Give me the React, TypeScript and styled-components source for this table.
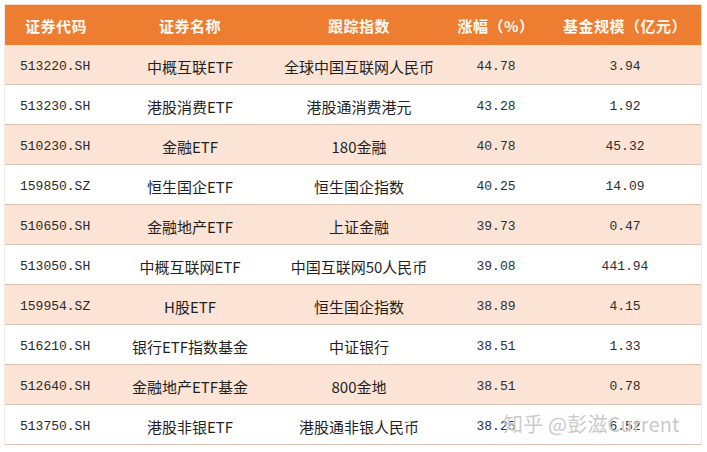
import React from "react";
import styled, { createGlobalStyle } from "styled-components";

const Global = createGlobalStyle`
  html, body { margin: 0; padding: 0; background: #ffffff; }
  body { font-family: "Noto Sans CJK SC", sans-serif; }
`;

const COLS = "102px 166px 172px 102px 156px";

const Page = styled.div`
  position: relative;
  width: 707px;
  height: 452px;
  padding: 5px 5px 0 4px;
  box-sizing: border-box;
  background: #ffffff;
`;

const Table = styled.div`
  width: 698px;
  display: flex;
  flex-direction: column;
  border-left: 1px solid #f1ece8;
  border-right: 1px solid #efe9e5;
  box-sizing: border-box;
`;

const HeaderRow = styled.div`
  display: grid;
  grid-template-columns: ${COLS};
  height: 40px;
  align-items: center;
  background: #ed7d31;
  box-shadow: 0 -1px 0 #f9dcc8;
`;

const HeadCell = styled.div`
  text-align: center;
  color: #fffaf4;
  font-family: "Noto Sans CJK SC", sans-serif;
  font-weight: 700;
  font-size: 15px;
  letter-spacing: 0.5px;
`;

const Row = styled.div<{ $shade: boolean }>`
  display: grid;
  grid-template-columns: ${COLS};
  height: 40px;
  align-items: center;
  box-sizing: border-box;
  padding-top: 3px;
  background: ${(p) => (p.$shade ? "#fbe4d5" : "#ffffff")};
  border-bottom: 1px solid #dcc3b2;
`;

const CodeCell = styled.div`
  padding-left: 15px;
  font-family: "Liberation Mono", monospace;
  font-size: 13px;
  color: #2a2a2a;
`;

const TextCell = styled.div`
  text-align: center;
  font-family: "Noto Sans CJK SC", sans-serif;
  font-size: 15px;
  color: #1f1f1f;
  white-space: nowrap;
`;

const NumCell = styled.div`
  text-align: center;
  font-family: "Liberation Mono", monospace;
  font-size: 13px;
  color: #2e2e2e;
`;

const Watermark = styled.div`
  position: absolute;
  left: 503px;
  top: 409px;
  font-family: "Noto Sans CJK SC", sans-serif;
  font-size: 20px;
  color: rgba(196, 196, 196, 0.92);
  text-shadow: 0 0 1px rgba(255, 255, 255, 0.9);
  white-space: nowrap;
  letter-spacing: 0.2px;
`;

type Item = { code: string; name: string; index: string; rise: string; size: string };

const data: Item[] = [
  { code: "513220.SH", name: "中概互联ETF", index: "全球中国互联网人民币", rise: "44.78", size: "3.94" },
  { code: "513230.SH", name: "港股消费ETF", index: "港股通消费港元", rise: "43.28", size: "1.92" },
  { code: "510230.SH", name: "金融ETF", index: "180金融", rise: "40.78", size: "45.32" },
  { code: "159850.SZ", name: "恒生国企ETF", index: "恒生国企指数", rise: "40.25", size: "14.09" },
  { code: "510650.SH", name: "金融地产ETF", index: "上证金融", rise: "39.73", size: "0.47" },
  { code: "513050.SH", name: "中概互联网ETF", index: "中国互联网50人民币", rise: "39.08", size: "441.94" },
  { code: "159954.SZ", name: "H股ETF", index: "恒生国企指数", rise: "38.89", size: "4.15" },
  { code: "516210.SH", name: "银行ETF指数基金", index: "中证银行", rise: "38.51", size: "1.33" },
  { code: "512640.SH", name: "金融地产ETF基金", index: "800金地", rise: "38.51", size: "0.78" },
  { code: "513750.SH", name: "港股非银ETF", index: "港股通非银人民币", rise: "38.25", size: "6.52" },
];

export default function App() {
  return (
    <>
      <Global />
      <Page>
        <Table>
          <HeaderRow>
            <HeadCell>证券代码</HeadCell>
            <HeadCell>证券名称</HeadCell>
            <HeadCell>跟踪指数</HeadCell>
            <HeadCell>涨幅（%）</HeadCell>
            <HeadCell>基金规模（亿元）</HeadCell>
          </HeaderRow>
          {data.map((d, i) => (
            <Row key={d.code + i} $shade={i % 2 === 0}>
              <CodeCell>{d.code}</CodeCell>
              <TextCell>{d.name}</TextCell>
              <TextCell>{d.index}</TextCell>
              <NumCell>{d.rise}</NumCell>
              <NumCell>{d.size}</NumCell>
            </Row>
          ))}
        </Table>
        <Watermark>知乎 @彭滋Current</Watermark>
      </Page>
    </>
  );
}
